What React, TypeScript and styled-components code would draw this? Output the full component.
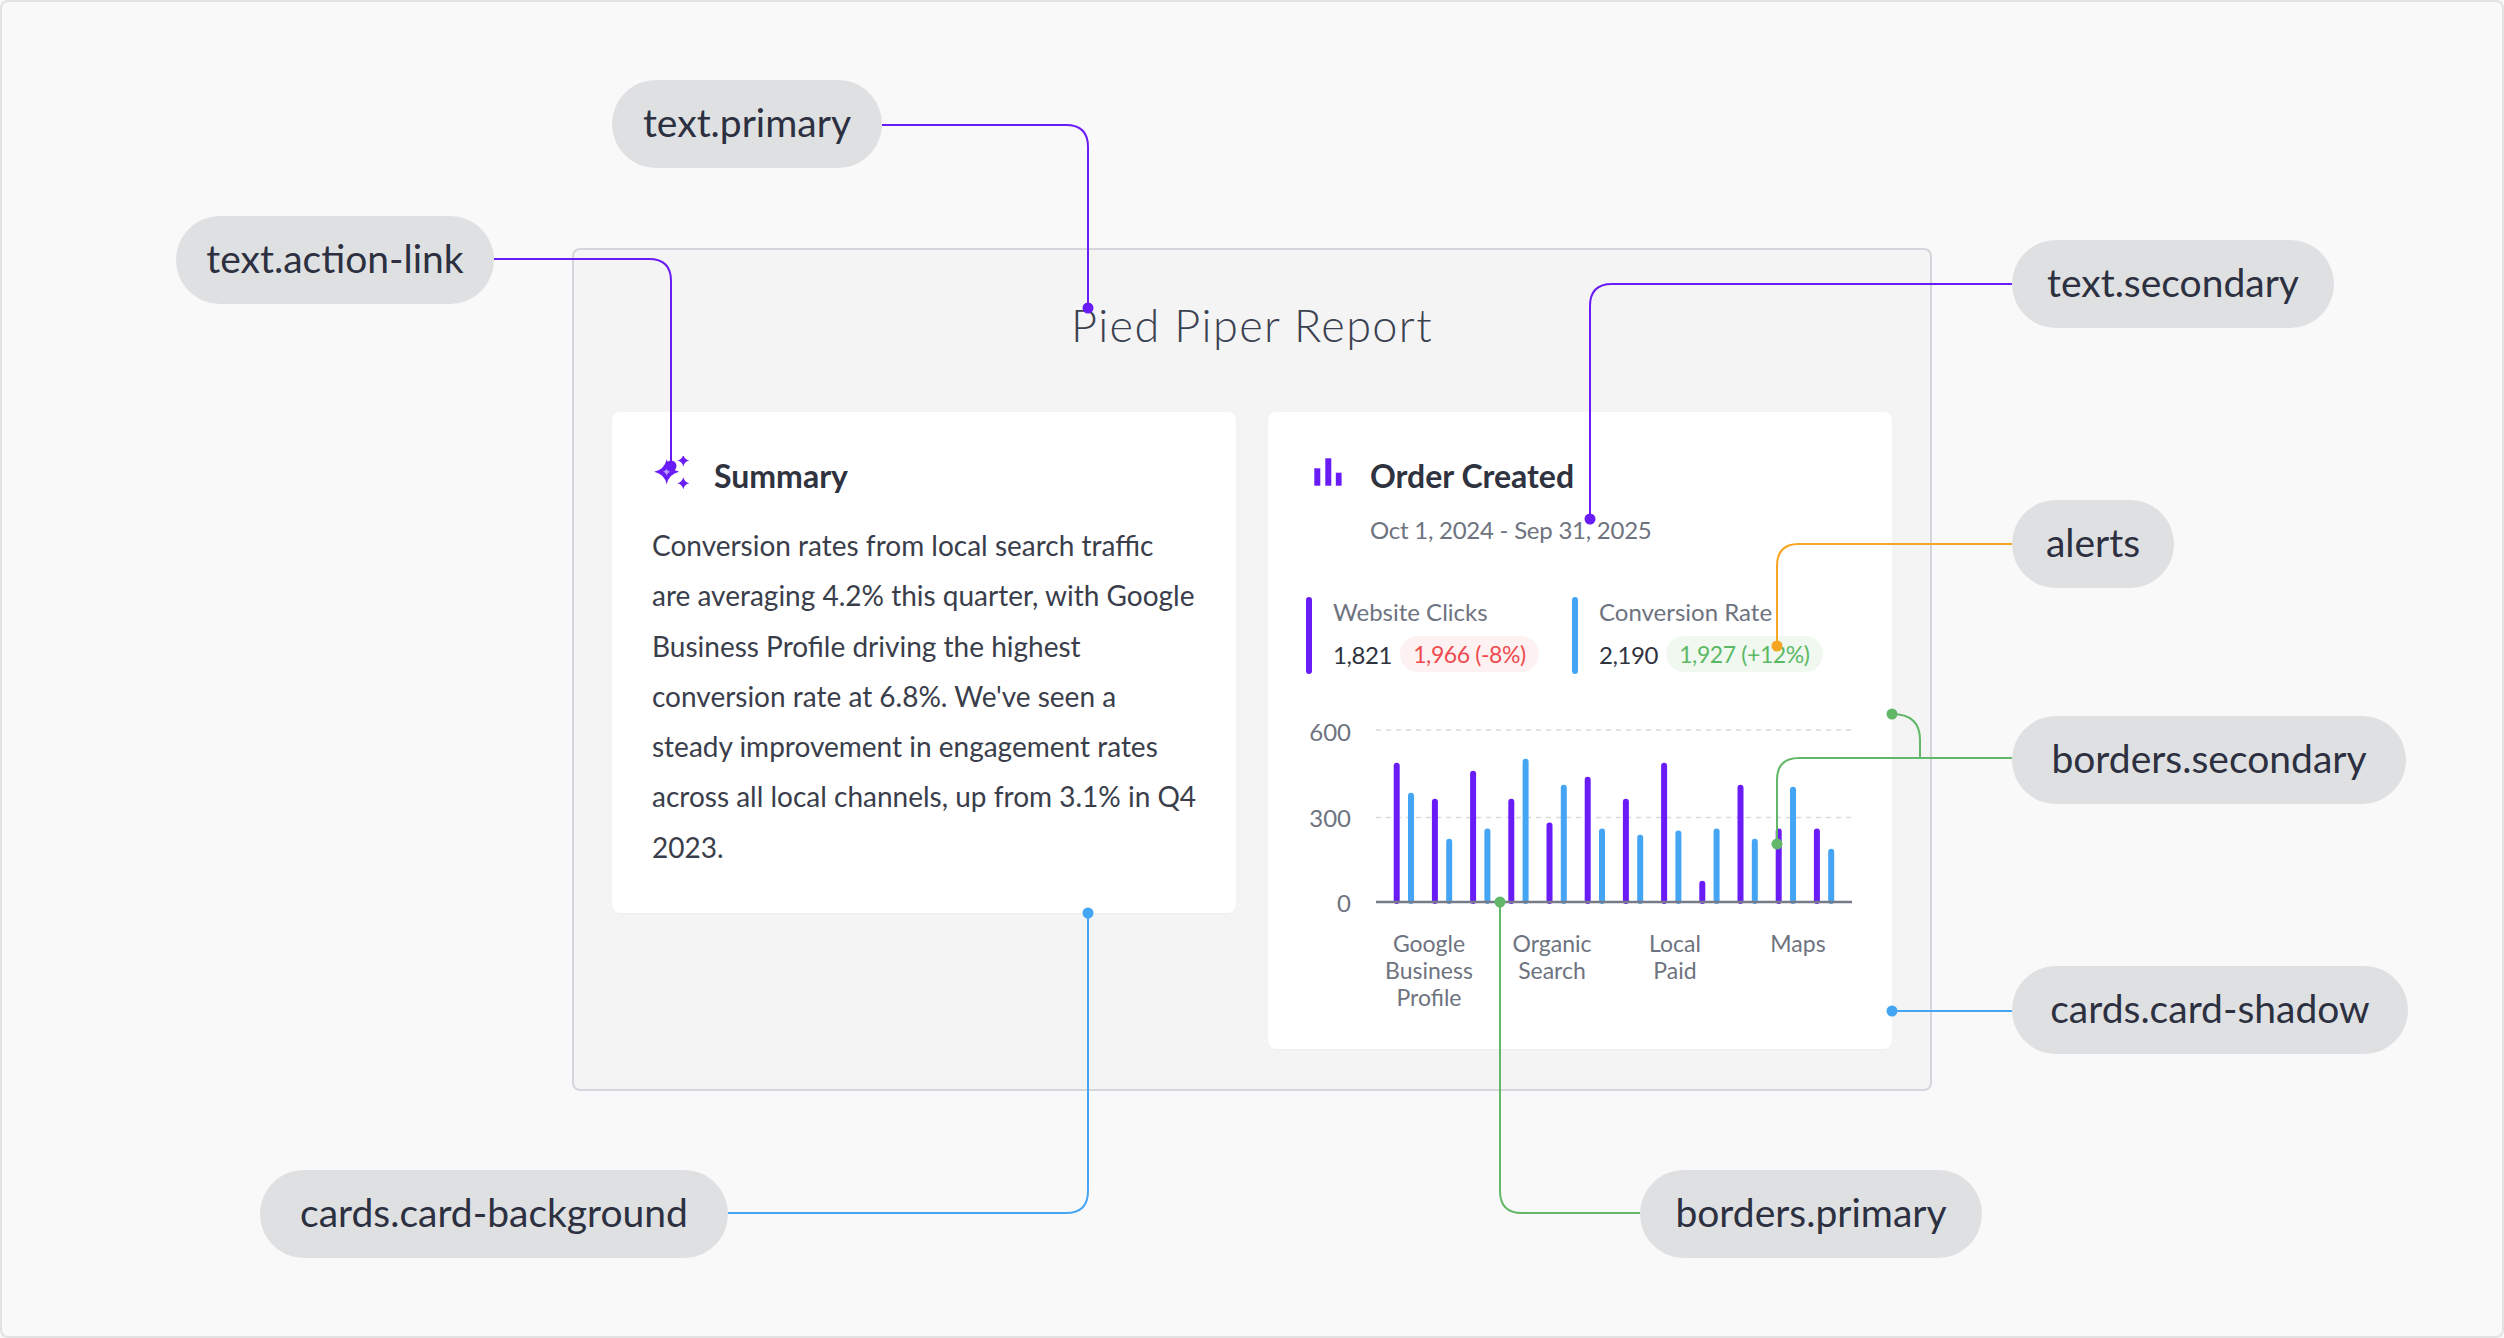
import React from 'react'
import styled, { createGlobalStyle } from 'styled-components'

const PURPLE = '#6a1cf6'
const BLUE = '#45a5f5'
const GREEN = '#62b868'
const ORANGE = '#f6a623'

const GlobalStyle = createGlobalStyle`
  html, body {
    margin: 0;
    padding: 0;
    background: #f9f9f9;
    overflow: hidden;
  }
  * {
    box-sizing: border-box;
  }
  body {
    font-family: Lato, 'Open Sans', sans-serif;
    color: #2f3340;
  }
`

const Page = styled.div`
  position: relative;
  width: 2504px;
  height: 1338px;
  padding: 248px 0 0 572px;
  background: #f9f9f9;
  border-radius: 8px;
  box-shadow: inset 0 0 0 2px #e2e2e2;
`

const Report = styled.section`
  width: 1360px;
  padding: 48px 38px 40px;
  background: #f4f4f4;
  border: 2px solid #d4d6db;
  border-radius: 8px;
`

const ReportTitle = styled.h1`
  margin: 0;
  font-size: 45px;
  font-weight: 300;
  letter-spacing: 1.4px;
  line-height: 54px;
  text-align: center;
  color: #3b4150;
`

const CardRow = styled.div`
  display: flex;
  align-items: flex-start;
  gap: 32px;
  margin-top: 60px;
`

const Card = styled.div<{ $pad: string }>`
  flex: 0 0 624px;
  min-width: 0;
  background: #fff;
  border-radius: 8px;
  padding: ${({ $pad }) => $pad};
  box-shadow: 0 1px 2px rgba(20, 20, 40, 0.03);
`

const CardHeader = styled.div`
  display: flex;
  align-items: center;
  gap: 22px;
  height: 40px;
`

const IconBox = styled.div<{ $w: number }>`
  flex: 0 0 ${({ $w }) => $w}px;
  height: 40px;
  display: flex;
  svg {
    display: block;
  }
`

const CardTitle = styled.h2`
  margin: 0;
  font-size: 32px;
  font-weight: 700;
  line-height: 40px;
  color: #2f3340;
`

const SummaryText = styled.p`
  margin: 24px 0 0;
  font-size: 28px;
  line-height: 50.3px;
  color: #3a3e4b;
`

const SummaryLine = styled.span`
  display: block;
  white-space: nowrap;
`

const DateRange = styled.div`
  margin: 19px 0 0 64px;
  font-size: 24px;
  letter-spacing: -0.25px;
  line-height: 30px;
  color: #6e7380;
`

const Metrics = styled.div`
  display: flex;
  margin-top: 52px;
`

const Metric = styled.div`
  flex: 0 0 266px;
  display: flex;
  gap: 21px;
  height: 77px;
`

const MetricBar = styled.div<{ $color: string }>`
  flex: 0 0 6px;
  border-radius: 3px;
  background: ${({ $color }) => $color};
`

const MetricBody = styled.div`
  display: flex;
  flex-direction: column;
`

const MetricLabel = styled.div`
  font-size: 24px;
  line-height: 30px;
  color: #6e7380;
  white-space: nowrap;
`

const MetricValues = styled.div`
  display: flex;
  align-items: center;
  gap: 8px;
  margin-top: 9px;
  height: 36px;
`

const MetricValue = styled.span`
  font-size: 24px;
  letter-spacing: -0.4px;
  color: #2f3340;
`

const ChangePill = styled.span<{ $tone: 'down' | 'up' }>`
  height: 36px;
  padding: 0 13px;
  border-radius: 18px;
  font-size: 23px;
  letter-spacing: -0.4px;
  line-height: 36px;
  white-space: nowrap;
  color: ${({ $tone }) => ($tone === 'down' ? '#ef4a4f' : '#5cb866')};
  background: ${({ $tone }) => ($tone === 'down' ? '#fdf1f1' : '#f0f8f0')};
`

const ChartSvg = styled.svg`
  display: block;
  margin-top: 26px;
  overflow: visible;
  font-family: Lato, sans-serif;
`

const CategoryRow = styled.div`
  display: grid;
  grid-template-columns: repeat(4, 123px);
  margin: 9.5px 0 0 61.5px;
`

const Category = styled.div`
  text-align: center;
  font-size: 23px;
  line-height: 27px;
  color: #6e7380;
`

const Overlay = styled.svg`
  position: absolute;
  left: 0;
  top: 0;
  pointer-events: none;
`

const Tag = styled.div<{ $x: number; $y: number; $w: number }>`
  position: absolute;
  left: ${({ $x }) => $x}px;
  top: ${({ $y }) => $y}px;
  width: ${({ $w }) => $w}px;
  height: 88px;
  padding-bottom: 3px;
  border-radius: 44px;
  background: #dfe0e2;
  color: #2c3040;
  font-size: 39px;
  line-height: 85px;
  text-align: center;
  white-space: nowrap;
`

const star = (cx: number, cy: number, r: number) => {
  const k = r * 0.18
  return `M${cx} ${cy - r} Q${cx + k} ${cy - k} ${cx + r} ${cy} Q${cx + k} ${cy + k} ${cx} ${cy + r} Q${cx - k} ${cy + k} ${cx - r} ${cy} Q${cx - k} ${cy - k} ${cx} ${cy - r}Z`
}

const SparkleIcon = () => (
  <svg width="40" height="40" viewBox="0 0 40 40">
    <path d={star(14.7, 15.7, 12.5)} fill={PURPLE} />
    <path d={star(14.7, 15.7, 4)} fill="#b89cff" />
    <path d={star(31.3, 4.5, 6)} fill={PURPLE} />
    <path d={star(31.3, 27.3, 6)} fill={PURPLE} />
  </svg>
)

const BarsIcon = () => (
  <svg width="42" height="40" viewBox="0 0 42 40">
    <rect x="8.3" y="12.3" width="6" height="17.4" fill={PURPLE} />
    <rect x="19.3" y="2.3" width="6" height="27.4" fill={PURPLE} />
    <rect x="29.8" y="16.7" width="5.8" height="13" fill={PURPLE} />
  </svg>
)

const summaryLines = [
  'Conversion rates from local search traffic',
  'are averaging 4.2% this quarter, with Google',
  'Business Profile driving the highest',
  "conversion rate at 6.8%. We've seen a",
  'steady improvement in engagement rates',
  'across all local channels, up from 3.1% in Q4',
  '2023.'
]

const clicks = [486, 360, 458, 360, 277, 437, 360, 486, 74, 409, 256, 256]
const rates = [381, 221, 256, 500, 409, 256, 235, 249, 256, 221, 402, 186]
const categories = [
  ['Google', 'Business', 'Profile'],
  ['Organic', 'Search'],
  ['Local', 'Paid'],
  ['Maps']
]

const BASE = 202
const SCALE = 172 / 600

const BarChart = () => (
  <ChartSvg width="546" height="220" viewBox="0 0 546 220">
    {[
      { label: '600', y: 40.5 },
      { label: '300', y: 127 },
      { label: '0', y: 212 }
    ].map((t) => (
      <text key={t.label} x="45" y={t.y} textAnchor="end" fontSize="24" fill="#6e7380">
        {t.label}
      </text>
    ))}
    <line x1="70" x2="546" y1="30" y2="30" stroke="#dadada" strokeWidth="1.5" strokeDasharray="5 5" />
    <line x1="70" x2="546" y1="117.5" y2="117.5" stroke="#dadada" strokeWidth="1.5" strokeDasharray="5 5" />
    {clicks.map((v, i) => {
      const h = v * SCALE
      return <rect key={`c${i}`} x={87.7 + i * 38.2} y={BASE - h} width="6" height={h + 2} rx="3" fill={PURPLE} />
    })}
    {rates.map((v, i) => {
      const h = v * SCALE
      return <rect key={`r${i}`} x={102 + i * 38.2} y={BASE - h} width="6" height={h + 2} rx="3" fill={BLUE} />
    })}
    <line x1="70" x2="546" y1={BASE} y2={BASE} stroke="#767b87" strokeWidth="2.5" />
  </ChartSvg>
)

const connectors = [
  { d: 'M882 125 H1066 Q1088 125 1088 147 V308', color: PURPLE, dot: [1088, 308] },
  { d: 'M494 259 H649 Q671 259 671 281 V466', color: PURPLE, dot: [671, 466] },
  { d: 'M2012 284 H1612 Q1590 284 1590 306 V519', color: PURPLE, dot: [1590, 519] },
  { d: 'M2012 544 H1799 Q1777 544 1777 566 V646', color: ORANGE, dot: [1777, 646] },
  { d: 'M2012 758 H1799 Q1777 758 1777 780 V844', color: GREEN, dot: [1777, 844] },
  { d: 'M1892 714 Q1920 714 1920 740 V758', color: GREEN, dot: [1892, 714] },
  { d: 'M1640 1213 H1522 Q1500 1213 1500 1191 V902', color: GREEN, dot: [1500, 902] },
  { d: 'M2012 1011 H1892', color: BLUE, dot: [1892, 1011] },
  { d: 'M728 1213 H1066 Q1088 1213 1088 1191 V913', color: BLUE, dot: [1088, 913] }
]

const tags = [
  { label: 'text.primary', x: 612, y: 80, w: 270 },
  { label: 'text.action-link', x: 176, y: 216, w: 318 },
  { label: 'text.secondary', x: 2012, y: 240, w: 322 },
  { label: 'alerts', x: 2012, y: 500, w: 162 },
  { label: 'borders.secondary', x: 2012, y: 716, w: 394 },
  { label: 'cards.card-shadow', x: 2012, y: 966, w: 396 },
  { label: 'cards.card-background', x: 260, y: 1170, w: 468 },
  { label: 'borders.primary', x: 1640, y: 1170, w: 342 }
]

const App: React.FC = () => (
  <>
    <GlobalStyle />
    <Page>
      <Report>
        <ReportTitle>Pied Piper Report</ReportTitle>
        <CardRow>
          <Card $pad="44px 40px 41px 40px">
            <CardHeader>
              <IconBox $w={40}>
                <SparkleIcon />
              </IconBox>
              <CardTitle>Summary</CardTitle>
            </CardHeader>
            <SummaryText>
              {summaryLines.map((line) => (
                <SummaryLine key={line}>{line}</SummaryLine>
              ))}
            </SummaryText>
          </Card>
          <Card $pad="44px 40px 38.5px 38px">
            <CardHeader>
              <IconBox $w={42}>
                <BarsIcon />
              </IconBox>
              <CardTitle>Order Created</CardTitle>
            </CardHeader>
            <DateRange>Oct 1, 2024 - Sep 31, 2025</DateRange>
            <Metrics>
              <Metric>
                <MetricBar $color={PURPLE} />
                <MetricBody>
                  <MetricLabel>Website Clicks</MetricLabel>
                  <MetricValues>
                    <MetricValue>1,821</MetricValue>
                    <ChangePill $tone="down">1,966 (-8%)</ChangePill>
                  </MetricValues>
                </MetricBody>
              </Metric>
              <Metric>
                <MetricBar $color={BLUE} />
                <MetricBody>
                  <MetricLabel>Conversion Rate</MetricLabel>
                  <MetricValues>
                    <MetricValue>2,190</MetricValue>
                    <ChangePill $tone="up">1,927 (+12%)</ChangePill>
                  </MetricValues>
                </MetricBody>
              </Metric>
            </Metrics>
            <BarChart />
            <CategoryRow>
              {categories.map((lines) => (
                <Category key={lines.join(' ')}>
                  {lines.map((l) => (
                    <div key={l}>{l}</div>
                  ))}
                </Category>
              ))}
            </CategoryRow>
          </Card>
        </CardRow>
      </Report>

      {tags.map((t) => (
        <Tag key={t.label} $x={t.x} $y={t.y} $w={t.w}>
          {t.label}
        </Tag>
      ))}

      <Overlay width="2504" height="1338" viewBox="0 0 2504 1338">
        {connectors.map((c) => (
          <g key={c.d}>
            <path d={c.d} fill="none" stroke={c.color} strokeWidth="2" />
            <circle cx={c.dot[0]} cy={c.dot[1]} r="5.5" fill={c.color} />
          </g>
        ))}
      </Overlay>
    </Page>
  </>
)

export default App
